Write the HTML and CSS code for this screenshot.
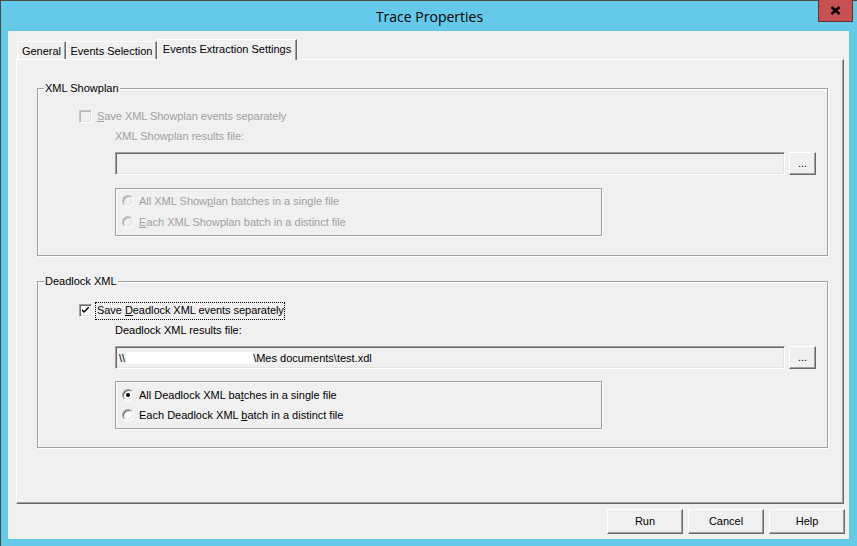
FILE: index.html
```html
<!DOCTYPE html>
<html>
<head>
<meta charset="utf-8">
<link rel="stylesheet" href="styles.css">
</head>
<body>
<div class="window">
  <div class="titlebar">Trace Properties</div>
  <div class="close"><svg width="11" height="9" viewBox="0 0 11 9"><path d="M1.5 1 L9.5 8 M9.5 1 L1.5 8" stroke="#000" stroke-width="2.4"/></svg></div>
  <div class="client">
    <div class="tabs">
      <div class="tab t1">General</div>
      <div class="tab t2">Events Selection</div>
      <div class="tab sel">Events Extraction Settings</div>
    </div>
    <div class="panel">
      <div class="group">
        <span class="legend">XML Showplan</span>
        <div class="chkrow disabled">
          <span class="chk off"></span>
          <span class="lbl"><u>S</u>ave XML Showplan events separately</span>
        </div>
        <div class="filelbl disabled">XML Showplan results file:</div>
        <div class="filerow">
          <div class="textbox"></div>
          <div class="dots">...</div>
        </div>
        <div class="radiobox disabled">
          <div class="rrow"><span class="radio off"></span><span>All XML Show<u>p</u>lan batches in a single file</span></div>
          <div class="rrow"><span class="radio off"></span><span><u>E</u>ach XML Showplan batch in a distinct file</span></div>
        </div>
      </div>
      <div class="group g2">
        <span class="legend">Deadlock XML</span>
        <div class="chkrow">
          <span class="chk"><svg width="7" height="7" viewBox="0 0 7 7"><path d="M0 2 L0 4 L2 6 L7 1 L7 -1 L2 4 Z" fill="#000"/></svg></span>
          <span class="lbl focus">Save <u>D</u>eadlock XML events separately</span>
        </div>
        <div class="filelbl">Deadlock XML results file:</div>
        <div class="filerow">
          <div class="textbox">\\<span class="redact"></span>\Mes documents\test.xdl</div>
          <div class="dots">...</div>
        </div>
        <div class="radiobox r2">
          <div class="rrow"><span class="radio on"></span><span>All Deadlock XML ba<u>t</u>ches in a single file</span></div>
          <div class="rrow"><span class="radio"></span><span>Each Deadlock XML <u>b</u>atch in a distinct file</span></div>
        </div>
      </div>
    </div>
    <div class="buttons">
      <div class="btn">Run</div>
      <div class="btn">Cancel</div>
      <div class="btn">Help</div>
    </div>
  </div>
</div>
</body>
</html>
```
FILE: styles.css
```css
html, body {
  margin: 0;
  padding: 0;
}
body {
  width: 857px;
  height: 546px;
  overflow: hidden;
  font-family: "Liberation Sans", Arial, sans-serif;
  font-size: 11px;
  color: #000;
}
.window {
  width: 857px;
  height: 546px;
  box-sizing: border-box;
  background: #65C9E9;
  border-top: 1px solid #4b4b4b;
  border-left: 1px solid #4b4b4b;
  position: relative;
}
.titlebar {
  height: 30px;
  display: flex;
  align-items: center;
  justify-content: center;
  font-family: "Open Sans", "Noto Sans", sans-serif;
  font-size: 14px;
  padding-left: 1px;
}
.close {
  position: absolute;
  top: -1px;
  right: 4px;
  width: 33px;
  height: 21px;
  background: #C75050;
  border: 1px solid #6b2f2f;
  border-top: none;
  display: flex;
  align-items: center;
  justify-content: center;
}
.client {
  margin-left: 7px;
  width: 841px;
  height: 508px;
  background: #F0F0F0;
  box-sizing: border-box;
  padding-top: 8px;
}
.tabs {
  display: flex;
  align-items: flex-end;
  height: 20px;
  padding-left: 9px;
  position: relative;
  z-index: 2;
}
.tab {
  height: 18px;
  box-sizing: border-box;
  border-top: 1px solid #fff;
  border-left: 1px solid #fff;
  border-right: 1px solid #696969;
  box-shadow: inset -1px 0 #A0A0A0;
  display: flex;
  align-items: center;
  justify-content: center;
  background: #F0F0F0;
  padding-top: 1px;
}
.t1 { width: 49px; }
.t2 { width: 91px; }
.sel {
  width: 140px;
  height: 21px;
  margin-bottom: -1px;
  padding-bottom: 3px;
}
.panel {
  margin-left: 8px;
  width: 828px;
  height: 445px;
  box-sizing: border-box;
  border-top: 1px solid #fff;
  border-left: 1px solid #fff;
  border-right: 1px solid #696969;
  border-bottom: 1px solid #696969;
  box-shadow: inset -1px -1px #A0A0A0;
  padding: 28px 0 0 20px;
}
.group {
  position: relative;
  width: 791px;
  height: 168px;
  box-sizing: border-box;
  border: 1px solid #A0A0A0;
  box-shadow: inset 1px 1px #fff, 1px 1px #fff;
  padding-left: 41px;
  padding-top: 21px;
}
.g2 {
  margin-top: 25px;
  height: 167px;
  padding-top: 22px;
}
.legend {
  position: absolute;
  top: -7px;
  left: 6px;
  background: #F0F0F0;
  padding: 0 1px;
  line-height: 13px;
}
.disabled { color: #A0A0A0; }
.chkrow {
  display: flex;
  align-items: center;
  height: 13px;
}
.chk {
  width: 13px;
  height: 13px;
  box-sizing: border-box;
  border: 1px solid;
  border-color: #A0A0A0 #fff #fff #A0A0A0;
  box-shadow: inset 1px 1px #696969, inset -1px -1px #E3E3E3;
  background: #fff;
  display: flex;
  align-items: center;
  justify-content: center;
}
.chk.off {
  background: #F0F0F0;
  border-color: #C8C8C8 #fff #fff #C8C8C8;
  box-shadow: inset 1px 1px #B8B8B8, inset -1px -1px #E3E3E3;
}
.lbl {
  margin-left: 3px;
  padding: 1px 0 2px 1px;
  border: 1px solid transparent;
  line-height: 13px;
  letter-spacing: -0.05px;
}
.lbl.focus { border: 1px dotted #000; }
.filelbl {
  margin-left: 36px;
  margin-top: 7px;
  line-height: 13px;
}
.filerow {
  display: flex;
  margin-left: 36px;
  margin-top: 9px;
  gap: 4px;
  height: 23px;
}
.textbox {
  width: 670px;
  height: 23px;
  box-sizing: border-box;
  border: 1px solid;
  border-color: #A0A0A0 #fff #fff #A0A0A0;
  box-shadow: inset 1px 1px #696969, inset -1px -1px #E3E3E3;
  background: #F0F0F0;
  padding-left: 3px;
  display: flex;
  align-items: center;
  white-space: pre;
}
.redact {
  display: inline-block;
  width: 127px;
  height: 12px;
  background: #fff;
  margin-left: 1px;
}
.dots {
  width: 27px;
  height: 23px;
  box-sizing: border-box;
  border: 1px solid;
  border-color: #fff #696969 #696969 #fff;
  box-shadow: inset -1px -1px #A0A0A0;
  display: flex;
  align-items: center;
  justify-content: center;
  padding-bottom: 2px;
}
.radiobox {
  margin-left: 36px;
  margin-top: 13px;
  width: 487px;
  height: 48px;
  box-sizing: border-box;
  border: 1px solid #A0A0A0;
  box-shadow: inset 1px 1px #fff, 1px 1px #fff;
  padding: 5px 0 0 6px;
  display: flex;
  flex-direction: column;
  gap: 8px;
}
.r2 {
  margin-top: 12px;
  padding-top: 6px;
  gap: 7px;
}
.rrow {
  display: flex;
  align-items: center;
  height: 13px;
  gap: 5px;
}
.radio {
  width: 12px;
  height: 12px;
  box-sizing: border-box;
  border-radius: 50%;
  border: 1px solid;
  border-color: #A0A0A0 #fff #fff #A0A0A0;
  box-shadow: inset 1px 1px #696969, inset -1px -1px #E3E3E3;
  background: #fff;
  position: relative;
  flex: none;
}
.radio.off {
  background: #F0F0F0;
  border-color: #C0C0C0 #fff #fff #C0C0C0;
  box-shadow: inset 1px 1px #A8A8A8, inset -1px -1px #E3E3E3;
}
.radio.on::after {
  content: "";
  position: absolute;
  left: 3px;
  top: 3px;
  width: 4px;
  height: 4px;
  border-radius: 50%;
  background: #000;
}
.buttons {
  display: flex;
  justify-content: flex-end;
  gap: 5px;
  margin-top: 5px;
  padding-right: 4px;
}
.btn {
  width: 76px;
  height: 25px;
  box-sizing: border-box;
  border: 1px solid;
  border-color: #fff #696969 #696969 #fff;
  box-shadow: inset -1px -1px #A0A0A0;
  display: flex;
  align-items: center;
  justify-content: center;
  padding-bottom: 1px;
}
```
